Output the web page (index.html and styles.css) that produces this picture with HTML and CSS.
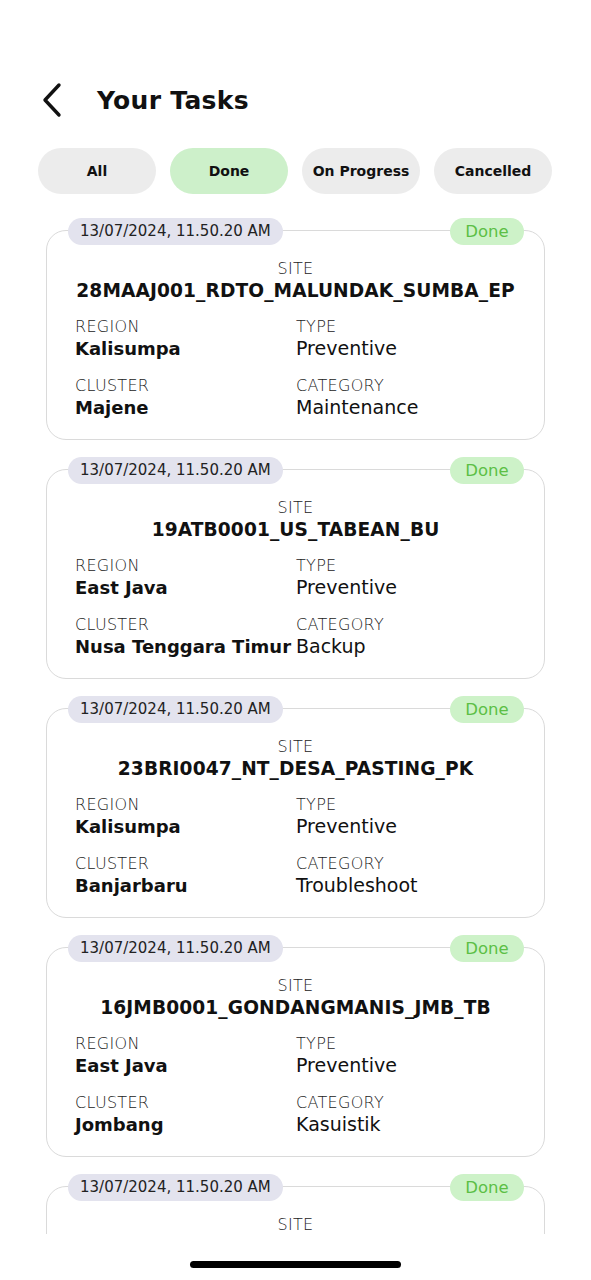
FILE: index.html
```html
<!DOCTYPE html>
<html>
<head>
<meta charset="utf-8">
<link rel="stylesheet" href="styles.css">
</head>
<body>
<div class="screen">
  <header class="topbar">
    <svg class="back" width="24" height="36" viewBox="0 0 24 36"><path d="M19 3 L5 18 L19 33" fill="none" stroke="#111" stroke-width="3.4" stroke-linecap="round" stroke-linejoin="round"/></svg>
    <h1 class="title">Your Tasks</h1>
  </header>
  <nav class="tabs">
    <div class="tab">All</div>
    <div class="tab active">Done</div>
    <div class="tab">On Progress</div>
    <div class="tab">Cancelled</div>
  </nav>
  <main class="list">
    <div class="card">
      <div class="head"><span class="date">13/07/2024, 11.50.20 AM</span><span class="status">Done</span></div>
      <div class="site"><div class="label">SITE</div><div class="site-name">28MAAJ001_RDTO_MALUNDAK_SUMBA_EP</div></div>
      <div class="grid">
        <div><div class="label">REGION</div><div class="val bold">Kalisumpa</div></div>
        <div><div class="label">TYPE</div><div class="val">Preventive</div></div>
        <div><div class="label">CLUSTER</div><div class="val bold">Majene</div></div>
        <div><div class="label">CATEGORY</div><div class="val">Maintenance</div></div>
      </div>
    </div>
    <div class="card">
      <div class="head"><span class="date">13/07/2024, 11.50.20 AM</span><span class="status">Done</span></div>
      <div class="site"><div class="label">SITE</div><div class="site-name">19ATB0001_US_TABEAN_BU</div></div>
      <div class="grid">
        <div><div class="label">REGION</div><div class="val bold">East Java</div></div>
        <div><div class="label">TYPE</div><div class="val">Preventive</div></div>
        <div><div class="label">CLUSTER</div><div class="val bold">Nusa Tenggara Timur</div></div>
        <div><div class="label">CATEGORY</div><div class="val">Backup</div></div>
      </div>
    </div>
    <div class="card">
      <div class="head"><span class="date">13/07/2024, 11.50.20 AM</span><span class="status">Done</span></div>
      <div class="site"><div class="label">SITE</div><div class="site-name">23BRI0047_NT_DESA_PASTING_PK</div></div>
      <div class="grid">
        <div><div class="label">REGION</div><div class="val bold">Kalisumpa</div></div>
        <div><div class="label">TYPE</div><div class="val">Preventive</div></div>
        <div><div class="label">CLUSTER</div><div class="val bold">Banjarbaru</div></div>
        <div><div class="label">CATEGORY</div><div class="val">Troubleshoot</div></div>
      </div>
    </div>
    <div class="card">
      <div class="head"><span class="date">13/07/2024, 11.50.20 AM</span><span class="status">Done</span></div>
      <div class="site"><div class="label">SITE</div><div class="site-name">16JMB0001_GONDANGMANIS_JMB_TB</div></div>
      <div class="grid">
        <div><div class="label">REGION</div><div class="val bold">East Java</div></div>
        <div><div class="label">TYPE</div><div class="val">Preventive</div></div>
        <div><div class="label">CLUSTER</div><div class="val bold">Jombang</div></div>
        <div><div class="label">CATEGORY</div><div class="val">Kasuistik</div></div>
      </div>
    </div>
    <div class="card">
      <div class="head"><span class="date">13/07/2024, 11.50.20 AM</span><span class="status">Done</span></div>
      <div class="site"><div class="label">SITE</div></div>
    </div>
  </main>
  <div class="home"><div class="home-bar"></div></div>
</div>
</body>
</html>
```
FILE: styles.css
```css
* { box-sizing: border-box; }
html, body { margin: 0; padding: 0; background: #fff; }
body {
  font-family: "DejaVu Sans", "Noto Sans", sans-serif;
  color: #111;
  width: 591px;
  height: 1280px;
  overflow: hidden;
}
.screen { display: flex; flex-direction: column; height: 1280px; }

.topbar {
  display: flex;
  align-items: center;
  height: 36px;
  margin-top: 82px;
  padding-left: 40px;
}
.back { display: block; }
.title {
  margin: 0 0 0 33px;
  font-size: 25px;
  font-weight: 700;
  letter-spacing: 0.3px;
  color: #111;
}

.tabs {
  display: flex;
  gap: 14px;
  padding: 0 39px 0 38px;
  margin-top: 30px;
}
.tab {
  width: 118px;
  height: 46px;
  border-radius: 23px;
  background: #ececec;
  display: flex;
  align-items: center;
  justify-content: center;
  font-size: 14px;
  font-weight: 600;
  color: #111;
}
.tab.active { background: #cdf0ca; }

.list {
  height: 1040px;
  overflow: hidden;
  padding: 36px 46px 0 46px;
  flex: none;
}
.card {
  border: 1.5px solid #dadada;
  border-radius: 20px;
  height: 210px;
  padding: 0 20px 0 28px;
  margin-bottom: 29px;
}
.head {
  display: flex;
  justify-content: space-between;
  align-items: center;
  margin: -13px 0 0 -7px;
  height: 27px;
}
.date {
  height: 27px;
  line-height: 27px;
  padding: 0 12px;
  border-radius: 14px;
  background: #e3e3ee;
  font-size: 15px;
  color: #222;
}
.status {
  height: 27px;
  line-height: 27px;
  width: 74px;
  text-align: center;
  border-radius: 14px;
  background: #cdf2c8;
  color: #5cbf45;
  font-size: 16.5px;
}
.site { text-align: center; margin-top: 15px; padding-right: 8px; }
.label {
  font-size: 16px;
  line-height: 18px;
  font-weight: 300;
  color: #222;
  letter-spacing: 0.3px;
}
.site-name {
  font-size: 18.6px;
  line-height: 25px;
  font-weight: 700;
  white-space: nowrap;
  letter-spacing: 0.1px;
}
.grid {
  display: grid;
  grid-template-columns: 221px 1fr;
  row-gap: 16px;
  margin-top: 15px;
}
.val {
  font-size: 18px;
  line-height: 25px;
  color: #111;
  white-space: nowrap;
}
.val.bold { font-weight: 700; }
.grid > div:nth-child(even) .val { font-size: 19px; }

.home {
  flex: 1;
  display: flex;
  justify-content: center;
  padding-top: 27px;
}
.home-bar {
  width: 211px;
  height: 7px;
  border-radius: 4px;
  background: #000;
}
```
